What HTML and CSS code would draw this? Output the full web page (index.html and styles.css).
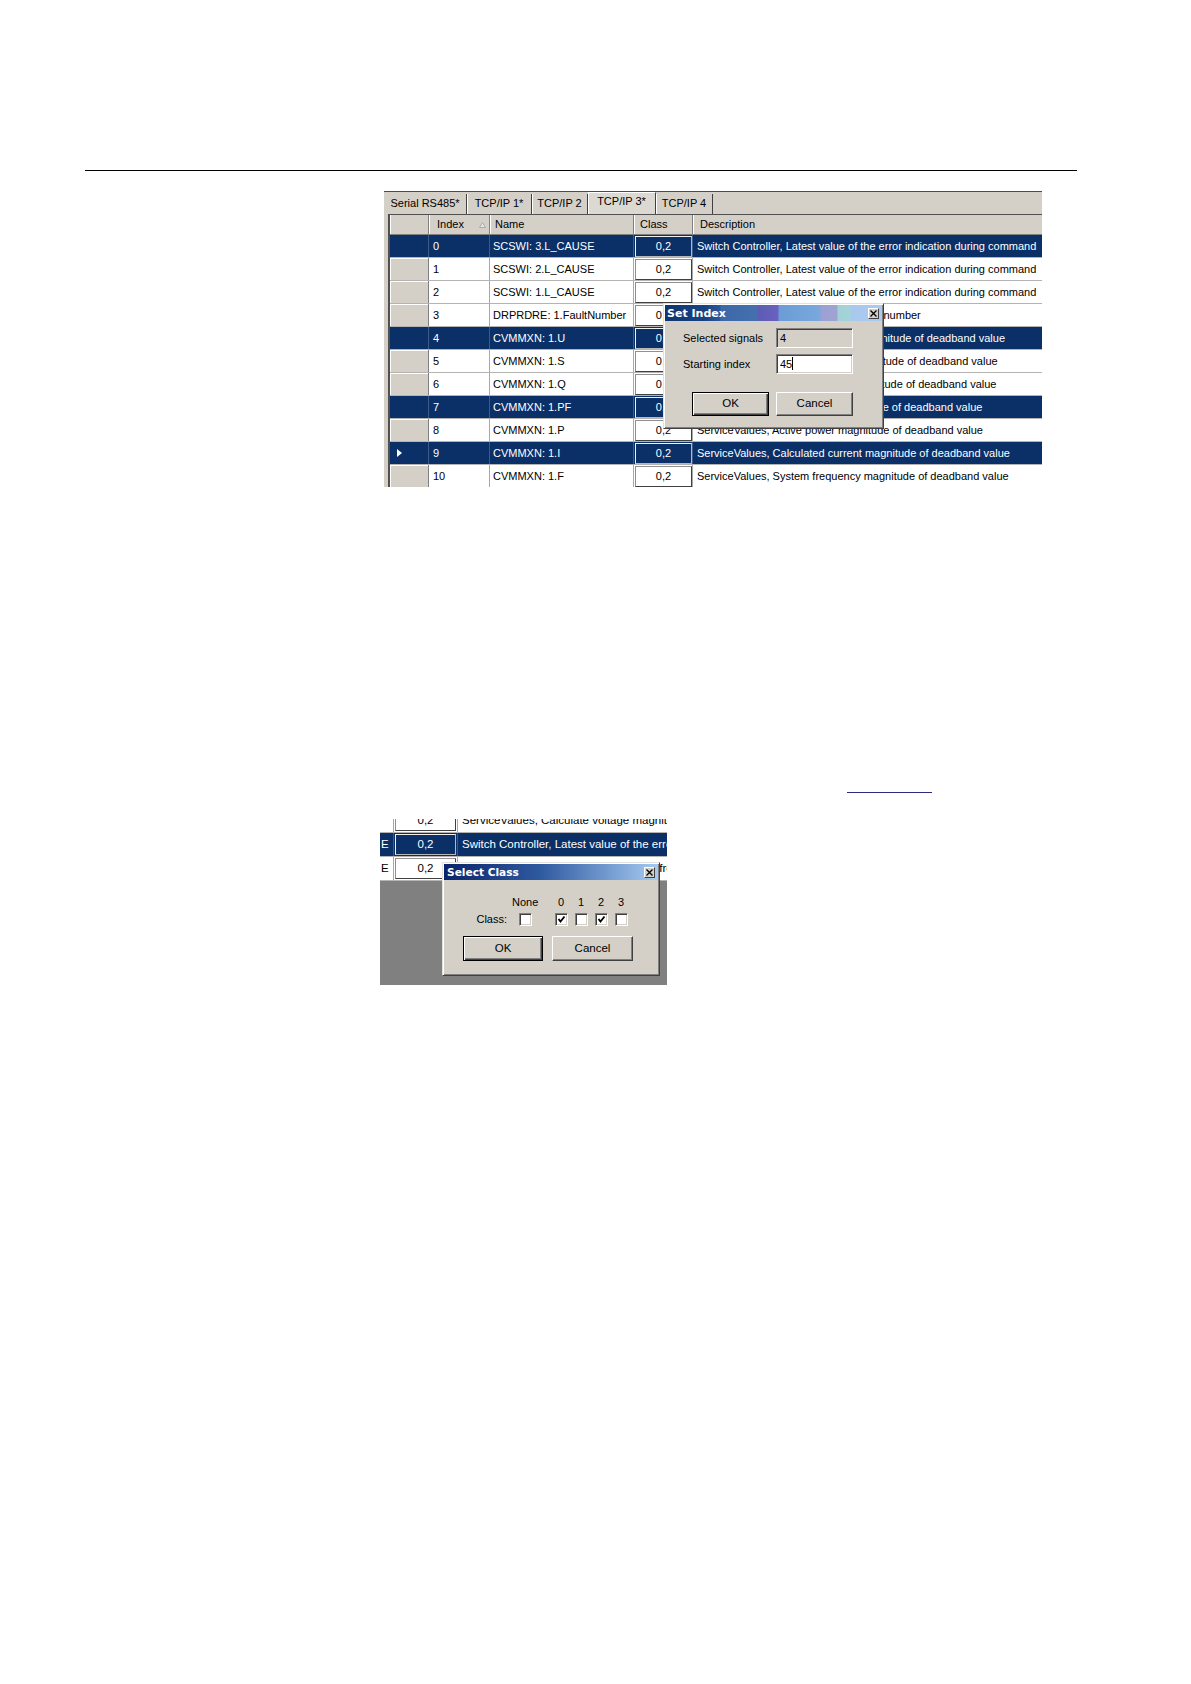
FILE: index.html
```html
<!DOCTYPE html>
<html>
<head>
<meta charset="utf-8">
<title>Set Index / Select Class</title>
<link rel="stylesheet" href="styles.css">
</head>
<body>
<div class="page">
  <div class="rule"></div>

  <div class="shot shot1">
    <div class="tabs">
      <div class="tab t1">Serial RS485*</div>
      <div class="tab t2">TCP/IP 1*</div>
      <div class="tab t3">TCP/IP 2</div>
      <div class="tab t4 active">TCP/IP 3*</div>
      <div class="tab t5">TCP/IP 4</div>
    </div>
    <div class="grid">
      <div class="row head">
        <div class="c rh"></div>
        <div class="c ix">Index <svg class="sort" width="7" height="6" viewBox="0 0 7 6"><path d="M3.5 0.5 L6.5 5.5 L0.5 5.5 Z" fill="#e8e8e8" stroke="#a8a8a8" stroke-width="1"/></svg></div>
        <div class="c nm">Name</div>
        <div class="c cl">Class</div>
        <div class="c ds">Description</div>
      </div>
      <div class="row sel">
        <div class="c rh"></div><div class="c ix">0</div><div class="c nm">SCSWI: 3.L_CAUSE</div>
        <div class="c cl"><div class="box">0,2</div></div>
        <div class="c ds">Switch Controller, Latest value of the error indication during command</div>
      </div>
      <div class="row">
        <div class="c rh"></div><div class="c ix">1</div><div class="c nm">SCSWI: 2.L_CAUSE</div>
        <div class="c cl"><div class="box">0,2</div></div>
        <div class="c ds">Switch Controller, Latest value of the error indication during command</div>
      </div>
      <div class="row">
        <div class="c rh"></div><div class="c ix">2</div><div class="c nm">SCSWI: 1.L_CAUSE</div>
        <div class="c cl"><div class="box">0,2</div></div>
        <div class="c ds">Switch Controller, Latest value of the error indication during command</div>
      </div>
      <div class="row">
        <div class="c rh"></div><div class="c ix">3</div><div class="c nm">DRPRDRE: 1.FaultNumber</div>
        <div class="c cl"><div class="box">0,2</div></div>
        <div class="c ds">Disturbance Report, Disturbance fault number</div>
      </div>
      <div class="row sel">
        <div class="c rh"></div><div class="c ix">4</div><div class="c nm">CVMMXN: 1.U</div>
        <div class="c cl"><div class="box">0,2</div></div>
        <div class="c ds">ServiceValues, Calculate voltage magnitude of deadband value</div>
      </div>
      <div class="row">
        <div class="c rh"></div><div class="c ix">5</div><div class="c nm">CVMMXN: 1.S</div>
        <div class="c cl"><div class="box">0,2</div></div>
        <div class="c ds">ServiceValues, Apparent power magnitude of deadband value</div>
      </div>
      <div class="row">
        <div class="c rh"></div><div class="c ix">6</div><div class="c nm">CVMMXN: 1.Q</div>
        <div class="c cl"><div class="box">0,2</div></div>
        <div class="c ds">ServiceValues, Reactive power magnitude of deadband value</div>
      </div>
      <div class="row sel">
        <div class="c rh"></div><div class="c ix">7</div><div class="c nm">CVMMXN: 1.PF</div>
        <div class="c cl"><div class="box">0,2</div></div>
        <div class="c ds">ServiceValues, Power factor magnitude of deadband value</div>
      </div>
      <div class="row">
        <div class="c rh"></div><div class="c ix">8</div><div class="c nm">CVMMXN: 1.P</div>
        <div class="c cl"><div class="box">0,2</div></div>
        <div class="c ds">ServiceValues, Active power magnitude of deadband value</div>
      </div>
      <div class="row sel">
        <div class="c rh"><svg class="cur" width="5" height="8" viewBox="0 0 5 8"><path d="M0 0 L5 4 L0 8 Z" fill="#fff"/></svg></div><div class="c ix">9</div><div class="c nm">CVMMXN: 1.I</div>
        <div class="c cl"><div class="box">0,2</div></div>
        <div class="c ds">ServiceValues, Calculated current magnitude of deadband value</div>
      </div>
      <div class="row">
        <div class="c rh"></div><div class="c ix">10</div><div class="c nm">CVMMXN: 1.F</div>
        <div class="c cl"><div class="box">0,2</div></div>
        <div class="c ds">ServiceValues, System frequency magnitude of deadband value</div>
      </div>
    </div>

    <div class="dlg setidx">
      <div class="title tb1">
        <span>Set Index</span>
        <span class="xbtn"><svg width="7" height="7" viewBox="0 0 7 7"><path d="M0.5 0.5 L6.5 6.5 M6.5 0.5 L0.5 6.5" stroke="#000" stroke-width="1.3"/></svg></span>
      </div>
      <div class="form">
        <div class="lbl">Selected signals</div>
        <div class="field ro">4</div>
        <div class="lbl">Starting index</div>
        <div class="field rw">45<span class="caret"></span></div>
      </div>
      <div class="btns b1">
        <div class="btn def">OK</div>
        <div class="btn">Cancel</div>
      </div>
    </div>
  </div>

  <div class="link-line"></div>

  <div class="shot shot2">
    <div class="rows2">
      <div class="row2">
        <div class="e"></div>
        <div class="cl2"><div class="box">0,2</div></div>
        <div class="ds2">ServiceValues, Calculate voltage magnitude of deadband value</div>
      </div>
      <div class="row2 sel">
        <div class="e">E</div>
        <div class="cl2"><div class="box">0,2</div></div>
        <div class="ds2">Switch Controller, Latest value of the error indication during command</div>
      </div>
      <div class="row2">
        <div class="e">E</div>
        <div class="cl2"><div class="box">0,2</div></div>
        <div class="ds2">ServiceValues, Calculated system line frequency</div>
      </div>
    </div>

    <div class="dlg selcls">
      <div class="title tb2">
        <span>Select Class</span>
        <span class="xbtn"><svg width="7" height="7" viewBox="0 0 7 7"><path d="M0.5 0.5 L6.5 6.5 M6.5 0.5 L0.5 6.5" stroke="#000" stroke-width="1.3"/></svg></span>
      </div>
      <div class="classgrid">
        <div></div><div class="hd">None</div><div></div><div class="hd">0</div><div class="hd">1</div><div class="hd">2</div><div class="hd">3</div>
        <div class="clbl">Class:</div>
        <div class="cbw"><span class="cb"></span></div>
        <div></div>
        <div class="cbw"><span class="cb"><svg width="9" height="9" viewBox="0 0 9 9"><path d="M1.5 4 L3.5 6.5 L7.5 1.5" fill="none" stroke="#000" stroke-width="1.8"/></svg></span></div>
        <div class="cbw"><span class="cb"></span></div>
        <div class="cbw"><span class="cb"><svg width="9" height="9" viewBox="0 0 9 9"><path d="M1.5 4 L3.5 6.5 L7.5 1.5" fill="none" stroke="#000" stroke-width="1.8"/></svg></span></div>
        <div class="cbw"><span class="cb"></span></div>
      </div>
      <div class="btns b2">
        <div class="btn def w80">OK</div>
        <div class="btn w81">Cancel</div>
      </div>
    </div>
  </div>
</div>
</body>
</html>
```

FILE: styles.css
```css
* { box-sizing: border-box; margin: 0; padding: 0; }
html, body { background: #fff; }
body {
  margin: 0;
  font-family: "Liberation Sans", Arial, sans-serif;
  font-size: 11px;
  color: #000;
}
.page { padding-top: 170px; padding-bottom: 40px; }

.rule {
  margin-left: 85px;
  width: 992px;
  height: 1px;
  background: #000;
}

.shot { position: relative; overflow: hidden; }

/* ---------- screenshot 1 ---------- */
.shot1 {
  margin-top: 20px;
  margin-left: 384px;
  width: 658px;
  height: 296px;
  background: #d4d0c8;
  border-top: 1px solid #2a5866;
}

.tabs {
  display: flex;
  height: 22px;
  align-items: flex-end;
}
.tab {
  height: 20px;
  line-height: 19px;
  text-align: center;
  white-space: nowrap;
  border-right: 1px solid #404040;
  box-shadow: inset 1px 0 #fff;
}
.t1 { width: 83px; box-shadow: none; }
.t2 { width: 65px; }
.t3 { width: 56px; }
.t4 { width: 68px; }
.t5 { width: 57px; }
.tab.active {
  height: 22px;
  line-height: 17px;
  background: #dcd9d3;
  border-top: 1px solid #fff;
  box-shadow: inset 1px 0 #fff;
}

.grid {
  margin-left: 4px;
  border-left: 2px solid #505050;
  border-top: 1px solid #505050;
  background: #fff;
}
.row {
  display: flex;
  height: 23px;
  border-bottom: 1px solid #b4b4b4;
  background: #fff;
}
.row.head {
  height: 20px;
  background: #d4d0c8;
  border-bottom: 1px solid #808080;
}
.c {
  flex: none;
  overflow: hidden;
  white-space: nowrap;
  line-height: 22px;
  padding-left: 4px;
  border-right: 1px solid #a8a8a8;
}
.head .c {
  line-height: 19px;
  border-right: 1px solid #808080;
  box-shadow: inset 1px 0 #fff;
}
.rh {
  width: 39px;
  background: #d4d0c8;
  border-right: 1px solid #808080;
  box-shadow: inset 1px 1px #fff;
  display: flex;
  align-items: center;
  padding-left: 7px;
}
.ix { width: 61px; }
.head .ix { padding-left: 8px; }
.sort { margin-left: 12px; vertical-align: 0px; }
.nm { width: 144px; padding-left: 3px; }
.head .nm { padding-left: 5px; }
.cl { width: 59px; padding: 1px 0 1px 1px; }
.head .cl { padding: 0 0 0 6px; }
.ds { flex: 1; padding-left: 4px; border-right: none; }
.head .ds { padding-left: 7px; border-right: none; }

.box {
  height: 21px;
  line-height: 19px;
  text-align: center;
  background: #fff;
  border: 1px solid;
  border-color: #909090 #404040 #404040 #909090;
}

.row.sel { background: #0a3067; color: #fff; }
.sel .c { border-right-color: #3b5a86; }
.sel .rh { background: #0a3067; box-shadow: none; border-right-color: #3b5a86; }
.sel .box {
  background: #0a3067;
  color: #fff;
  border-color: #f0f0f0 #b8b8b8 #b8b8b8 #f0f0f0;
}

/* ---------- dialogs ---------- */
.dlg {
  position: absolute;
  background: #d4d0c8;
  border: 1px solid;
  border-color: #e4e2de #404040 #404040 #e4e2de;
  box-shadow: inset 1px 1px #fff, inset -1px -1px #808080;
  padding: 1px;
  color: #000;
}
.title {
  height: 16px;
  display: flex;
  align-items: center;
  justify-content: space-between;
  padding: 0 2px 0 2px;
  color: #fff;
  font-family: "DejaVu Sans", Verdana, sans-serif;
  font-weight: bold;
  font-size: 11px;
  white-space: nowrap;
}
.tb1 {
  background: linear-gradient(90deg,
    #0e3570 0px, #1a4282 40px, #2c5898 55px,
    #3d68a8 56px, #4570ae 92px,
    #5c5cb4 93px, #6a60c0 113px,
    #6c9cd6 114px, #78a8dc 155px,
    #9c9fd2 156px, #a0a4d4 172px,
    #a2d2d4 173px, #a4d4d8 185px,
    #a8c8ee 186px, #aacaf0 216px);
}
.tb2 {
  padding-left: 3px;
  font-size: 10.6px;
  background: linear-gradient(90deg, #0a246a 0%, #2f5aa0 45%, #86acdc 85%, #a6caf0 100%);
}
.xbtn {
  width: 11px;
  height: 11px;
  background: #d4d0c8;
  border: 1px solid;
  border-color: #fff #404040 #404040 #fff;
  display: flex;
  align-items: center;
  justify-content: center;
  margin-right: 1px;
}

/* Set Index */
.setidx { left: 279px; top: 111px; width: 221px; height: 126px; }
.form {
  display: grid;
  grid-template-columns: 93px 77px;
  grid-auto-rows: 20px;
  row-gap: 6px;
  align-items: center;
  padding: 7px 0 0 18px;
}
.lbl { white-space: nowrap; }
.field {
  height: 20px;
  line-height: 18px;
  padding-left: 3px;
  border: 1px solid;
  border-color: #808080 #fff #fff #808080;
  box-shadow: inset 1px 1px #404040, inset -1px -1px #d4d0c8;
}
.field.ro { background: #d4d0c8; }
.field.rw { background: #fff; }
.caret {
  display: inline-block;
  width: 1px;
  height: 13px;
  background: #000;
  vertical-align: -2px;
}
.btns { display: flex; }
.b1 { margin-top: 18px; padding-left: 27px; gap: 7px; }
.btn {
  width: 77px;
  height: 24px;
  line-height: 21px;
  text-align: center;
  font-size: 11.5px;
  background: #d4d0c8;
  border: 1px solid;
  border-color: #fff #404040 #404040 #fff;
  box-shadow: inset -1px -1px #808080;
}
.btn.def {
  border-color: #000;
  box-shadow: inset 1px 1px #fff, inset -1px -1px #404040, inset -2px -2px #808080;
}

/* ---------- link underline ---------- */
.link-line {
  margin-top: 305px;
  margin-left: 847px;
  width: 85px;
  height: 1px;
  background: #2b2a7c;
}

/* ---------- screenshot 2 ---------- */
.shot2 {
  margin-top: 26px;
  margin-left: 380px;
  width: 287px;
  height: 166px;
  background: #808080;
  font-size: 11.5px;
}
.rows2 { margin-top: -10px; }
.row2 {
  display: flex;
  height: 24px;
  background: #fff;
  border-bottom: 1px solid #b4b4b4;
  white-space: nowrap;
}
.row2 .e {
  flex: none;
  width: 14px;
  padding-left: 1px;
  line-height: 23px;
  border-right: 1px solid #a8a8a8;
}
.row2 .cl2 { flex: none; width: 64px; padding: 1px; border-right: 1px solid #a8a8a8; }
.row2 .cl2 .box { height: 21px; line-height: 19px; }
.row2 .ds2 { flex: 1; overflow: hidden; padding-left: 4px; line-height: 23px; }
.row2.sel { background: #0a3067; color: #fff; }
.row2.sel .e, .row2.sel .cl2 { border-right-color: #3b5a86; }

/* Select Class */
.selcls { left: 62px; top: 43px; width: 218px; height: 114px; font-size: 11px; }
.classgrid {
  display: grid;
  grid-template-columns: 68px 26px 13px 20px 20px 20px 20px;
  grid-template-rows: 12px 14px;
  row-gap: 4px;
  padding-top: 16px;
}
.hd { text-align: center; line-height: 12px; }
.clbl { text-align: right; padding-right: 5px; line-height: 15px; }
.cbw { display: flex; justify-content: center; align-items: center; }
.cb {
  width: 13px;
  height: 13px;
  background: #fff;
  border: 1px solid;
  border-color: #808080 #fff #fff #808080;
  box-shadow: inset 1px 1px #404040, inset -1px -1px #d4d0c8;
  display: flex;
  align-items: center;
  justify-content: center;
}
.b2 { margin-top: 10px; padding-left: 19px; gap: 9px; }
.btn.w80 { width: 80px; height: 25px; line-height: 22px; }
.btn.w81 { width: 81px; height: 25px; line-height: 22px; }
```
